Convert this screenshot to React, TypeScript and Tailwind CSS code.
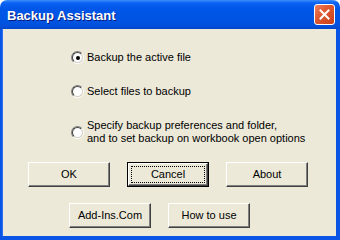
import React from "react";

const font = { fontFamily: '"Liberation Sans", Arial, sans-serif' };

function Radio({ checked }: { checked?: boolean }) {
  return (
    <div className="w-[13px] h-[13px] shrink-0 rounded-full border border-t-[#808080] border-l-[#808080] border-b-white border-r-white">
      <div className="w-full h-full rounded-full border border-t-[#404040] border-l-[#404040] border-b-[#d4d0c8] border-r-[#d4d0c8] bg-white flex items-center justify-center">
        {checked && <div className="w-[4px] h-[4px] rounded-full bg-black" />}
      </div>
    </div>
  );
}

function Btn({ label, focused }: { label: string; focused?: boolean }) {
  if (focused) {
    return (
      <div className="w-[82px] h-[25px] border border-black">
        <div className="w-full h-full border border-t-white border-l-white border-b-[#404040] border-r-[#404040] shadow-[inset_-1px_-1px_#808080] bg-[#ece9d8] p-[2px]">
          <div className="w-full h-full border border-dotted border-black flex items-center justify-center text-[11px] text-black leading-none">
            {label}
          </div>
        </div>
      </div>
    );
  }
  return (
    <div className="w-[82px] h-[25px] border border-t-white border-l-white border-b-[#404040] border-r-[#404040] shadow-[inset_-1px_-1px_#808080] bg-[#ece9d8] flex items-center justify-center text-[11px] text-black leading-none">
      {label}
    </div>
  );
}

export default function App() {
  return (
    <div className="w-[340px] h-[240px] flex flex-col bg-white" style={font}>
      <div className="h-[29px] shrink-0 rounded-t-[7px] bg-[linear-gradient(180deg,#3d8ffc_0%,#0b62f3_10%,#0056e7_30%,#0054e3_70%,#0250da_90%,#0546c8_100%)] flex items-center justify-between pl-[7px] pr-[5px]">
        <span className="text-white font-bold text-[13px] leading-none pt-[1px] [text-shadow:1px_1px_0_#0a1a7a]">
          Backup Assistant
        </span>
        <div className="w-[21px] h-[21px] rounded-[3px] border border-white bg-[linear-gradient(135deg,#ee8060_0%,#e05a32_40%,#c8401a_100%)] flex items-center justify-center">
          <svg width="11" height="11" viewBox="0 0 11 11">
            <path d="M1.5 1.5 L9.5 9.5 M9.5 1.5 L1.5 9.5" stroke="white" strokeWidth="2" strokeLinecap="square" />
          </svg>
        </div>
      </div>
      <div className="flex-1 bg-[#0a55e5] px-[0px] pb-[0px] flex flex-col">
        <div className="flex-1 flex flex-col ml-[3px] mr-[4px] mb-[4px] bg-[#ece9d8] shadow-[-1px_0_0_#2a6ff0]">
          <div className="flex flex-col pl-[68px] pt-[22px] text-[11px] leading-[13px] text-black">
            <div className="flex items-center gap-[3px] h-[13px]">
              <Radio checked />
              <span>Backup the active file</span>
            </div>
            <div className="flex items-center gap-[3px] h-[13px] mt-[21px]">
              <Radio />
              <span>Select files to backup</span>
            </div>
            <div className="flex items-center gap-[3px] mt-[21px]">
              <Radio />
              <span>
                Specify backup preferences and folder,
                <br />
                and to set backup on workbook open options
              </span>
            </div>
          </div>
          <div className="flex gap-[17px] pl-[25px] mt-[17px]">
            <Btn label="OK" />
            <Btn label="Cancel" focused />
            <Btn label="About" />
          </div>
          <div className="flex gap-[17px] pl-[66px] mt-[16px]">
            <Btn label="Add-Ins.Com" />
            <Btn label="How to use" />
          </div>
        </div>
      </div>
    </div>
  );
}
